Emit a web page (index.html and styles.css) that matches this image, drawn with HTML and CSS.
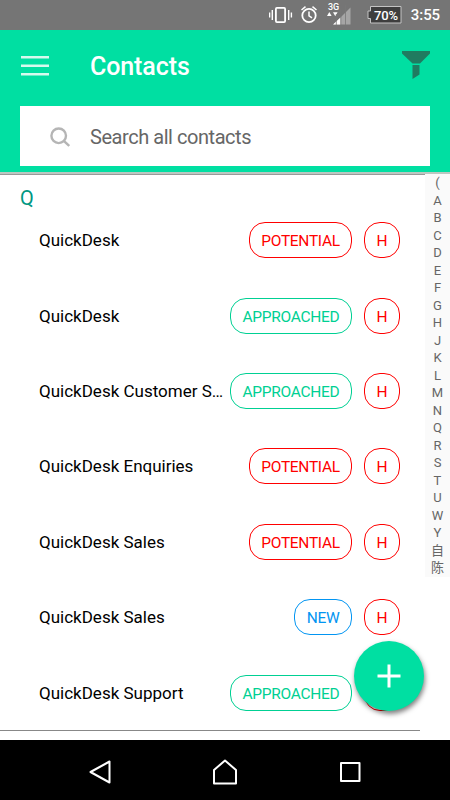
FILE: index.html
```html
<!DOCTYPE html>
<html lang="en">
<head>
    <meta charset="UTF-8">
    <meta name="viewport" content="width=device-width, initial-scale=1.0">
    <title>Contacts</title>
    <link rel="stylesheet" href="styles.css">
</head>
<body>
    <div class="status-bar">
        <svg class="status-icons" width="150" height="30" viewBox="0 0 150 30">
            <g fill="none" stroke="#fff" stroke-width="1.8">
                <rect x="6.9" y="7.9" width="9.2" height="14.2" rx="1"/>
                <path d="M3.3 10v10M19.7 10v10M.6 12.5v5M22.4 12.5v5" stroke-width="1.4"/>
                <circle cx="40" cy="15.5" r="6.7"/>
                <path d="M40 11.5v4.3l3 2M32.5 10l4-3.3M47.5 10l-4-3.3" stroke-width="1.5"/>
            </g>
            <text class="network" x="59" y="10">3G</text>
            <path d="M58 16l2.3-4 2.3 4zM64 12.3h4.6l-2.3 4z" fill="#fff"/>
            <path d="M81.5 7.5v17h-17z" fill="#a5a5a5"/>
            <path d="M71.5 17.500v7H64z" fill="#fff"/>
            <path d="M67.300 14v11M71.800 9v16M76.500 5v20" stroke="#777" stroke-width=".8"/>
            <path d="M101.500 6.500H132v16.500H101.500v-4.500h-2.500v-7.500h2.500z" fill="#3e3e3e" stroke="#c4c4c4"/>
            <text class="battery" x="105" y="19.5">70%</text>
        </svg>
        <span class="clock">3:55</span>
    </div>

    <div class="header">
        <div class="title-row">
            <svg class="menu" width="28" height="20" viewBox="0 0 28 20">
                <path d="M0 1.300h28M0 9.800h28M0 18.200h28" stroke="#d5faee" stroke-width="2.500"/>
            </svg>
            <h1>Contacts</h1>
            <svg class="filter" width="28" height="28" viewBox="0 0 28 28">
                <path d="M0 0h28v2.500L18 12.500h-7.500L0 2.500z" fill="#207b60"/>
                <path d="M10.500 14h7v9.500l-7 4.500z" fill="#207b60"/>
            </svg>
        </div>
        <div class="search">
            <svg width="20" height="20" viewBox="0 0 20 20" fill="none" stroke="#b5b5b5" stroke-width="2.400">
                <circle cx="8.700" cy="8.800" r="7.300"/>
                <path d="M13.800 13.800l5.400 5.200"/>
            </svg>
            <span>Search all contacts</span>
        </div>
    </div>

    <div class="content">
        <div class="list">
            <h2>Q</h2>
            <div class="row">
                <span class="name">QuickDesk</span>
                <span class="tag potential">POTENTIAL</span>
                <span class="tag hot">H</span>
            </div>
            <div class="row">
                <span class="name">QuickDesk</span>
                <span class="tag approached">APPROACHED</span>
                <span class="tag hot">H</span>
            </div>
            <div class="row">
                <span class="name">QuickDesk Customer S…</span>
                <span class="tag approached">APPROACHED</span>
                <span class="tag hot">H</span>
            </div>
            <div class="row">
                <span class="name">QuickDesk Enquiries</span>
                <span class="tag potential">POTENTIAL</span>
                <span class="tag hot">H</span>
            </div>
            <div class="row">
                <span class="name">QuickDesk Sales</span>
                <span class="tag potential">POTENTIAL</span>
                <span class="tag hot">H</span>
            </div>
            <div class="row">
                <span class="name">QuickDesk Sales</span>
                <span class="tag new">NEW</span>
                <span class="tag hot">H</span>
            </div>
            <div class="row">
                <span class="name">QuickDesk Support</span>
                <span class="tag approached">APPROACHED</span>
                <span class="tag hot">H</span>
            </div>
            <div class="list-end"></div>
        </div>
        <div class="index">
            <span>(</span>
            <span>A</span>
            <span>B</span>
            <span>C</span>
            <span>D</span>
            <span>E</span>
            <span>F</span>
            <span>G</span>
            <span>H</span>
            <span>J</span>
            <span>K</span>
            <span>L</span>
            <span>M</span>
            <span>N</span>
            <span>Q</span>
            <span>R</span>
            <span>S</span>
            <span>T</span>
            <span>U</span>
            <span>W</span>
            <span>Y</span>
            <span>自</span>
            <span>陈</span>
        </div>
        <div class="add-button">
            <svg width="24" height="24" viewBox="0 0 24 24">
                <path d="M12 .5v23M.5 12h23" stroke="#fff" stroke-width="3"/>
            </svg>
        </div>
    </div>

    <div class="nav-bar">
        <svg width="26" height="28" viewBox="0 0 26 28">
            <path d="M22.500 3.500v21L3.500 14z"/>
        </svg>
        <svg width="26" height="28" viewBox="0 0 26 28">
            <path d="M13 2.500L24 12v13.500H2V12z"/>
        </svg>
        <svg width="26" height="28" viewBox="0 0 26 28">
            <path d="M4 5h18.500v18H4z"/>
        </svg>
    </div>
</body>
</html>
```
FILE: styles.css
```css
* {
    box-sizing: border-box;
}
body {
    margin: 0;
    height: 800px;
    display: flex;
    flex-direction: column;
    background-color: #fff;
    font-family: Roboto, "Noto Sans CJK SC", sans-serif;
    overflow: hidden;
}
.status-bar {
    height: 30px;
    flex-shrink: 0;
    display: flex;
    align-items: center;
    justify-content: flex-end;
    padding-right: 10px;
    background-color: #757575;
    color: #fff;
}
.status-icons {
    margin-right: -8px;
}
.network {
    fill: #fff;
    font-size: 9px;
    font-weight: 500;
}
.battery {
    fill: #fff;
    font-size: 13px;
    font-weight: 500;
    letter-spacing: -0.2px;
}
.clock {
    font-size: 15px;
    font-weight: 500;
    line-height: 32px;
    letter-spacing: -0.1px;
}
.header {
    height: 142px;
    flex-shrink: 0;
    padding: 0 20px;
    background-color: #00dfa2;
}
.title-row {
    height: 76px;
    display: flex;
    align-items: center;
    padding: 0 0 6px 1px;
}
.menu {
    margin-top: 1px;
}
h1 {
    margin: 2px 0 0 41px;
    font-size: 25px;
    font-weight: 500;
    letter-spacing: -0.1px;
    color: #fff;
}
.filter {
    margin-left: auto;
}
.search {
    height: 60px;
    display: flex;
    align-items: center;
    gap: 20px;
    padding: 1px 0 0 30px;
    background-color: #fff;
    color: #666;
    font-size: 20px;
    letter-spacing: -0.45px;
}
.content {
    position: relative;
    height: 568px;
    flex-shrink: 0;
    display: flex;
    align-items: flex-start;
    border-top: 2px solid #bcc7c1;
}
.list {
    width: 425px;
    padding: 0 25px 0 20px;
    box-shadow: inset 0 1px #999;
}
h2 {
    height: 28.6px;
    margin: 0;
    padding-top: 11px;
    font-size: 20px;
    line-height: 26px;
    font-weight: 400;
    letter-spacing: -0.5px;
    color: #009782;
}
.row {
    height: 75.4px;
    display: flex;
    align-items: center;
    padding-left: 19px;
}
.list-end {
    height: 1px;
    margin: 0 -20px;
    background-color: #888;
}
.name {
    flex: 1;
    min-width: 0;
    white-space: nowrap;
    font-size: 17px;
    color: #000;
}
.tag {
    height: 36px;
    margin-left: 12px;
    border: 1px solid;
    border-radius: 16px;
    font-size: 15.5px;
    line-height: 36px;
    letter-spacing: -0.3px;
    text-align: center;
}
.name + .tag {
    margin-left: 5px;
}
.potential {
    width: 103px;
    color: #f00;
}
.approached {
    width: 122px;
    color: #00d093;
}
.new {
    width: 58px;
    color: #0295f2;
}
.hot {
    width: 36px;
    color: #f00;
}
.index {
    width: 25px;
    display: flex;
    flex-direction: column;
    background-color: #fafafa;
    color: #666;
    font-size: 13px;
    text-align: center;
}
.index span {
    height: 17.5px;
    line-height: 17.5px;
}
.add-button {
    position: absolute;
    right: 26px;
    top: 467px;
    width: 70px;
    height: 70px;
    display: flex;
    align-items: center;
    justify-content: center;
    border-radius: 50%;
    background-color: #00dfa2;
    box-shadow: 1px 3px 5px rgba(0, 0, 0, 0.5);
}
.nav-bar {
    height: 60px;
    flex-shrink: 0;
    display: flex;
    align-items: center;
    justify-content: space-between;
    padding: 4px 87px 0;
    background-color: #000;
}
.nav-bar svg {
    fill: none;
    stroke: #fff;
    stroke-width: 2;
    stroke-linejoin: round;
}
```
